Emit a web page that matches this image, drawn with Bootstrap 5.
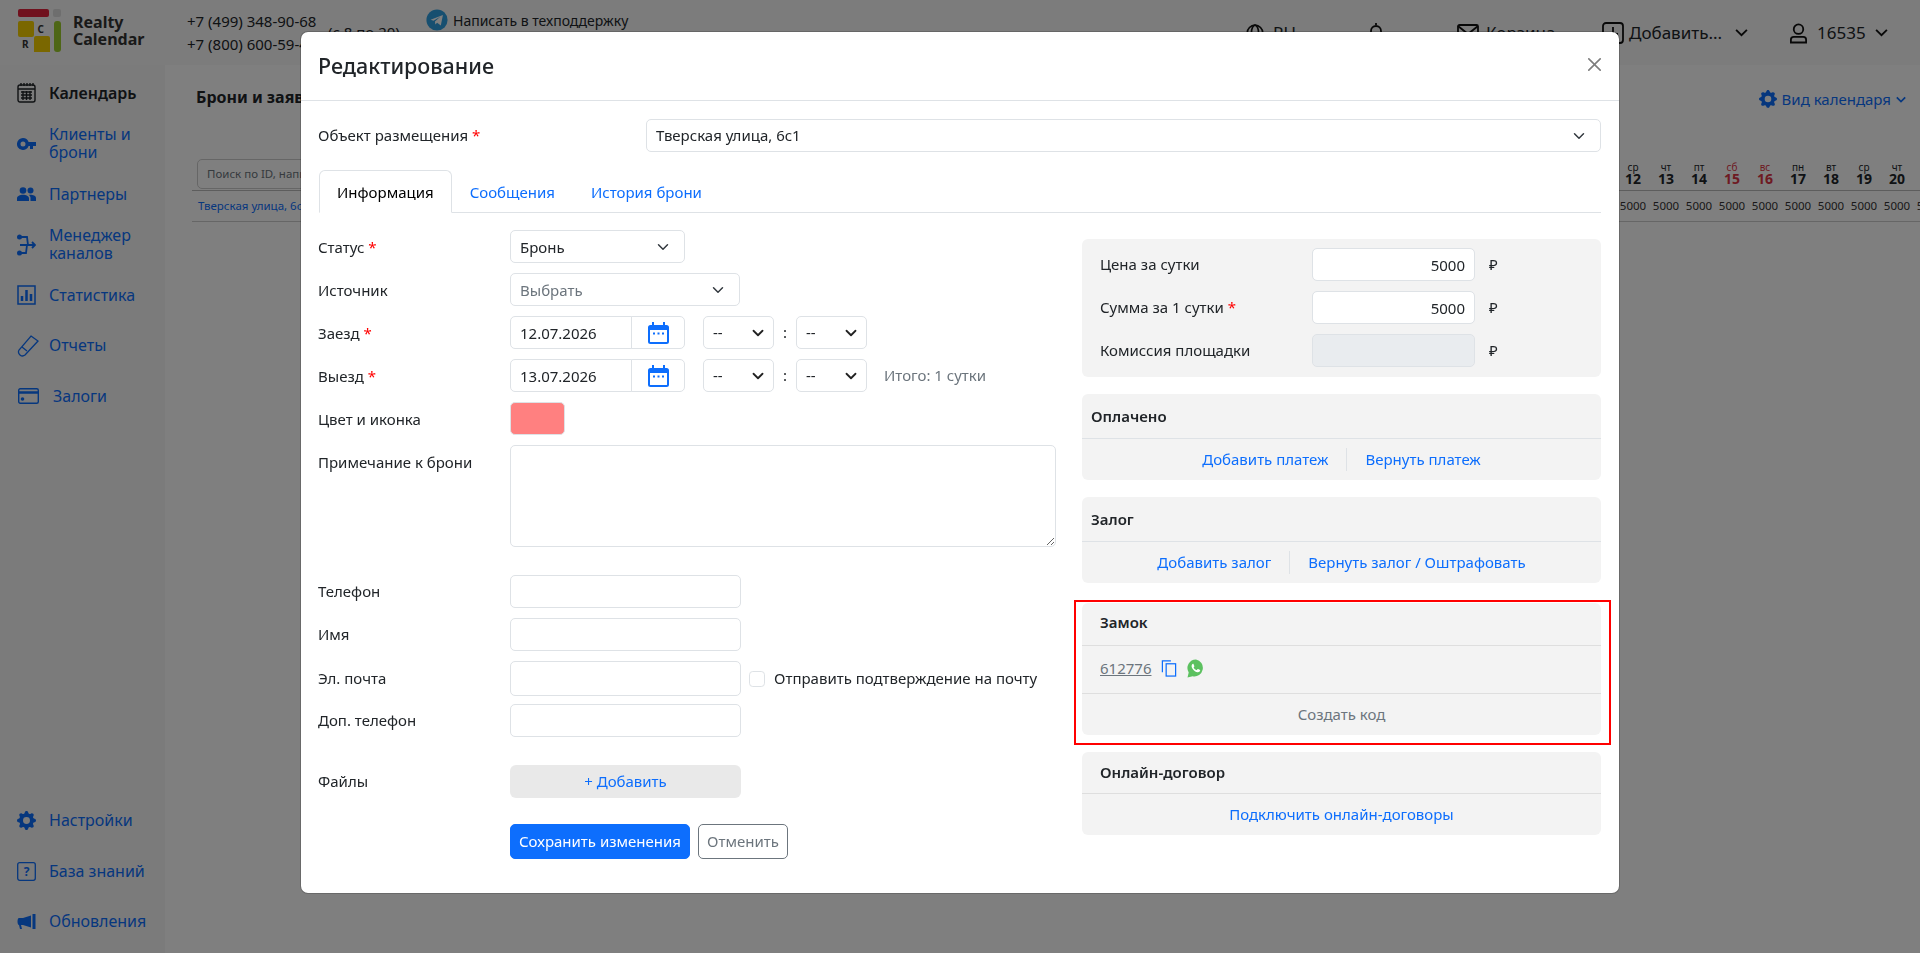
<!DOCTYPE html>
<html lang="ru">
<head>
<meta charset="utf-8">
<title>Редактирование</title>
<link rel="stylesheet" href="https://cdn.jsdelivr.net/npm/bootstrap@5.3.0/dist/css/bootstrap.min.css">
<style>
html,body{height:100%;overflow:hidden}
body{font-family:"Noto Sans","Liberation Sans",sans-serif;font-size:15px;color:#212529;background:#fff}
.rc-page{height:953px;display:flex;flex-direction:column}
.rc-top{height:65px;background:#f8f8f8;display:flex;align-items:center;flex:none;padding-left:17px}
.rc-logo{width:46px;height:44px;flex:none;margin-bottom:4px}
.rc-brand{font-weight:700;font-size:16px;line-height:17px;width:124px;padding-left:10px;color:#333;margin-bottom:3px}
.rc-phones{font-size:15px;line-height:23px;width:141px;white-space:nowrap}
.rc-hours{font-size:15px;width:98px;white-space:nowrap}
.rc-tg{display:flex;align-items:center;gap:5px;font-size:14px;margin-bottom:25px;width:820px}
.rc-tr{display:flex;align-items:center;font-size:17px;white-space:nowrap}
.rc-g7{gap:9px}
.rc-w-globe{width:122px}
.rc-w-bell{width:89px}
.rc-w-mail{width:145px;gap:7px}
.rc-w-add{width:187px;gap:5px}
.rc-w-user{gap:9px}
.rc-body{flex:1;display:flex;min-height:0}
.rc-side{width:165px;flex:none;background:#f6f6f6;padding:3px 0 6px 17px;display:flex;flex-direction:column;justify-content:space-between}
.rc-side-item{height:50.5px;display:flex;align-items:center;font-size:16px;line-height:17.5px;color:#0d6efd;text-decoration:none}
.rc-side-item.rc-active{color:#212529;font-weight:600}
.rc-side-ic{width:32px;flex:none;display:flex}
.rc-side-ic.rc-wide{width:36px}
.rc-ml1{margin-left:1px}
.rc-main{flex:1;min-width:0;padding:0 0 0 27px;position:relative;overflow:hidden}
.rc-main-h{display:flex;justify-content:space-between;align-items:flex-start;padding:20px 14px 0 4px;height:95px;font-size:15px}
.rc-main-h b{font-size:16px}
.rc-vid{color:#0d6efd;display:flex;align-items:center;gap:5px;padding-top:3px}
.rc-search{display:flex;justify-content:space-between;align-items:flex-end;height:31px;border-bottom:1px solid #bbb}
.rc-search-in{margin:0 0 1px 5px;width:200px;height:30px;border:1px solid #ccc;border-radius:5px;font-size:11.5px;padding:5px 9px;color:#6c757d}
.rc-days{display:flex;text-align:center;line-height:10px;font-size:10px;padding-bottom:4px;margin-right:6.5px}
.rc-day{width:33px;display:flex;flex-direction:column}
.rc-day b{font-size:14px;line-height:14px}
.rc-day.rc-we{color:#dc3545}
.rc-rowline{display:flex;justify-content:space-between;align-items:center;height:31px;border-bottom:1px solid #ccc;font-size:11.5px;color:#0d6efd;padding-left:6px}
.rc-cells{display:flex;color:#333;margin-right:-26.5px;flex:none}
.rc-cells span{width:33px;text-align:center;flex:none}
.rc-dialog{max-width:none;width:1320px;margin:31px auto 0}
.rc-dialog .modal-header{height:69px;padding:0 18px 0 17px;border-bottom-color:#dee2e6}
.rc-dialog .modal-title{font-size:21.5px;font-weight:500}
.rc-dialog .btn-close{margin:-4px -5px 0 0;font-size:12.5px;padding:6px}
.rc-dialog .modal-body{padding:18px 18px 34px 18px}
.rc-obj{display:flex;align-items:center;margin-bottom:18px}
.rc-obj-l{width:328px;flex:none;margin-left:-1px}
.rc-star{color:#f00}
.rc-tabs{font-size:15px}
.rc-tabs .nav-link{height:43px;padding:10px 17px}
.rc-cols{display:flex;justify-content:space-between;padding-top:17px}
.rc-left{width:737px}
.rc-right{width:519px;padding-top:9px;flex:none}
.rc-row{display:flex;align-items:center;margin-bottom:10px}
.rc-lbl{width:192px;flex:none;margin-left:-1px}
.rc-down .rc-lbl{padding-top:2px}
.rc-f{height:33px;font-size:15px;padding:3px 9px;min-height:0;border-radius:5px}
.form-select.rc-f{padding-right:28px;background-position:right 13px center}
.form-select.rc-w175,.form-select.rc-w230{padding-top:5px;padding-bottom:3px}
.rc-w175{width:175px}
.rc-w230{width:230px}
.rc-w231{width:231px}
.rc-date{width:175px;flex:none;margin-right:18px;flex-wrap:nowrap}
.rc-date .form-control{border-right:1px solid #dee2e6}
.rc-date .input-group-text{background:#fff;width:54px;padding:0;justify-content:center}
.form-select.rc-time{width:71px;flex:none;background-position:right 7px center;background-image:url("data:image/svg+xml,%3csvg xmlns='http://www.w3.org/2000/svg' viewBox='0 0 16 16'%3e%3cpath fill='none' stroke='%23222' stroke-linecap='round' stroke-linejoin='round' stroke-width='2.4' d='m2 5 6 6 6-6'/%3e%3c/svg%3e")}
.rc-colon{width:22px;text-align:center;flex:none}
.rc-total{margin-left:17px;color:#6c757d}
.rc-color{width:55px;height:33px;background:#ff8080;border:1px solid #dee2e6;border-radius:5px}
.rc-note{height:102px;width:546px;border-radius:5px}
.rc-top-al{align-items:flex-start}
.rc-top-al .rc-lbl{padding-top:6px}
.rc-after-note{margin-top:28px}
.rc-check{margin:0 9px 0 8px;width:16px;height:16px;flex:none}
.rc-mail{height:35px;margin-bottom:8px}
.rc-files{margin-top:28px;margin-bottom:26px}
.rc-addfile{width:231px;height:33px;font-size:15px;background:#e9e9e9;color:#0d6efd;border:0;padding:0}
.rc-save{display:flex;gap:8px;padding-left:191px}
.rc-save .btn{height:35px;font-size:15px;padding:0 8px;border-radius:5px}
.rc-panel{background:#f3f3f3;border-radius:6px;margin-bottom:17px}
.rc-pr{padding:9px 18px 10px}
.rc-pr-row{display:flex;align-items:center;margin-bottom:10px}
.rc-pr-row:last-child{margin-bottom:0}
.rc-pr-l{width:212px;flex:none}
.rc-num{width:163px;text-align:right;flex:none}
.rc-rub{margin-left:14px}
.rc-ph{height:45px;display:flex;align-items:center;padding:0 9px;font-weight:600;font-size:15px;border-bottom:1px solid #dee2e6}
.rc-ph2{padding-left:18px;height:43px;border-bottom-color:#dedede}
.rc-lock .rc-ph2{padding-bottom:3px}
.rc-ph3{height:42px}
.rc-pf{height:41px;display:flex;align-items:center;justify-content:center}
.rc-pf a{text-decoration:none}
.rc-sep{width:1px;height:23px;background:#dee2e6;margin:0 18px}
.rc-lock{position:relative;margin-top:20px}
.rc-frame{position:absolute;left:-8px;right:-10px;top:-3px;bottom:-10px;border:2px solid #f00;pointer-events:none}
.rc-code{height:48px;display:flex;align-items:center;padding:0 18px 2px;border-bottom:1px solid #dedede;gap:10px}
.rc-code a{color:#6c757d}
.rc-muted{color:#6c757d}
</style>
</head>
<body>
<div class="rc-page">
  <header class="rc-top">
    <svg class="rc-logo" viewBox="0 0 46 44"><rect x="1" y="0" width="31" height="8" rx="2" fill="#e0233c"/><rect x="36" y="0" width="8" height="8" rx="2" fill="#ddd"/><rect x="1" y="12" width="16" height="16" rx="2" fill="#f5cf00"/><rect x="37" y="12" width="7" height="31" rx="3" fill="#9ccc2c"/><path d="M17 43V29a2 2 0 0 1 2-2h12a2 2 0 0 1 2 2v14z" fill="#f5cf00"/><text x="20.500" y="24" font-size="10" font-weight="700" font-family="Noto Sans" fill="#333">C</text><text x="5" y="39" font-size="10" font-weight="700" font-family="Noto Sans" fill="#333">R</text></svg>
    <div class="rc-brand">Realty<br>Calendar</div>
    <div class="rc-phones">+7 (499) 348-90-68<br>+7 (800) 600-59-46</div>
    <div class="rc-hours">(с 8 по 20)</div>
    <div class="rc-tg"><svg width="22" height="22" viewBox="0 0 26 26"><circle cx="13" cy="13" r="12.5" fill="#2f9fe0"/><path d="M5.500 12.600 20 7l-2.500 12.500-4.300-3.200-2.200 2.100-.4-3.600 6.600-6-8.300 5.100z" fill="#fff"/></svg>Написать в техподдержку</div>
    <div class="rc-tr">
      <div class="rc-tr rc-w-globe rc-g7"><svg width="18" height="18" viewBox="0 0 18 18" fill="none" stroke="#111" stroke-width="1.700"><circle cx="9" cy="9" r="7.800"/><ellipse cx="9" cy="9" rx="3.600" ry="7.800"/><path d="M1 9h16"/></svg>RU</div>
      <div class="rc-tr rc-w-bell"><svg width="16" height="22" viewBox="0 0 16 22" fill="none" stroke="#111" stroke-width="1.800"><path d="M8 1v2M3 17V9a5 5 0 0 1 10 0v8M1 17h14M6 20h4"/></svg></div>
      <div class="rc-tr rc-w-mail"><svg width="22" height="17" viewBox="0 0 22 17" fill="none" stroke="#111" stroke-width="1.800"><rect x="1" y="1" width="20" height="15" rx="1.500"/><path d="m1 2 10 8 10-8"/></svg>Корзина</div>
      <div class="rc-tr rc-w-add"><svg width="22" height="22" viewBox="0 0 22 22" fill="none" stroke="#111" stroke-width="1.800"><rect x="1" y="1" width="20" height="20" rx="3"/><path d="M11 5v7h5"/></svg>Добавить...<svg class="ms-2" width="13" height="9" viewBox="0 0 14 10" fill="none" stroke="#111" stroke-width="2"><path d="m1 2 6 6 6-6"/></svg></div>
      <div class="rc-tr rc-w-user"><svg width="19" height="22" viewBox="0 0 20 22" fill="none" stroke="#111" stroke-width="1.900"><circle cx="10" cy="7" r="5"/><path d="M2 21v-3a3 3 0 0 1 3-3h10a3 3 0 0 1 3 3v3z"/></svg><span>16535</span><svg width="13" height="9" viewBox="0 0 14 10" fill="none" stroke="#111" stroke-width="2"><path d="m1 2 6 6 6-6"/></svg></div>
    </div>
  </header>
  <div class="rc-body">
    <aside class="rc-side">
      <div>
        <a class="rc-side-item rc-active" href="#"><span class="rc-side-ic"><svg width="19" height="20" viewBox="0 0 19 20" fill="none" stroke="#212529" stroke-width="1.400"><rect x="1" y="2" width="17" height="17" rx="2"/><path d="M1 6h17M4 0v3M7 0v3M10 0v3M13 0v3M16 0v3M4 9h11M4 12h11M4 15h11M6 8v9M9.500 8v9M13 8v9"/></svg></span>Календарь</a>
        <a class="rc-side-item" href="#"><span class="rc-side-ic"><svg width="19" height="12" viewBox="0 0 19 12" fill="#0d6efd"><path d="M6 0a6 6 0 1 0 5.600 8H13v3h3V8h3V4H11.600A6 6 0 0 0 6 0zm0 3.500a2.500 2.500 0 1 1 0 5 2.500 2.500 0 0 1 0-5z"/></svg></span><span>Клиенты и брони</span></a>
        <a class="rc-side-item" href="#"><span class="rc-side-ic"><svg width="19" height="14" viewBox="0 0 19 14" fill="#0d6efd"><circle cx="6" cy="3.500" r="3.300"/><circle cx="13.500" cy="3.500" r="3"/><path d="M0 14v-2.500C0 9 3 7.800 6 7.800s6 1.200 6 3.700V14zM13.500 14v-3c0-1.200-.5-2.300-1.500-3.100 3-.4 7 .7 7 3.100v3z"/></svg></span>Партнеры</a>
        <a class="rc-side-item" href="#"><span class="rc-side-ic"><svg width="19" height="22" viewBox="0 0 19 22" fill="none" stroke="#0d6efd" stroke-width="1.800"><circle cx="2.500" cy="3" r="1.600" fill="#0d6efd"/><circle cx="2.500" cy="19" r="1.600" fill="#0d6efd"/><path d="M3 3h7l1 8h7M3 11h8M3 19h6l1-8M15 8l3 3-3 3"/></svg></span><span>Менеджер каналов</span></a>
        <a class="rc-side-item" href="#"><span class="rc-side-ic"><svg width="19" height="20" viewBox="0 0 19 20" fill="none" stroke="#0d6efd" stroke-width="1.500"><rect x="1" y="1" width="17" height="18"/><path stroke-width="2.500" d="M5 16v-5M9.500 16V5M14 16V9"/></svg></span>Статистика</a>
        <a class="rc-side-item" href="#"><span class="rc-side-ic"><svg width="22" height="22" viewBox="0 0 22 22" fill="none" stroke="#0d6efd" stroke-width="1.300"><path d="M14 1l7 5L8 20a4 4 0 0 1-6-5zM5 12l5 4"/></svg></span>Отчеты</a>
        <a class="rc-side-item" href="#"><span class="rc-side-ic rc-wide"><svg width="21" height="16" viewBox="0 0 21 16" fill="none" stroke="#0d6efd" stroke-width="1.400" class="rc-ml1"><rect x=".7" y=".7" width="19.600" height="14.600" rx="1.500"/><path stroke-width="2.500" d="M1 4.500h19"/><circle cx="4.500" cy="11" r="1.800" fill="#0d6efd" stroke="none"/></svg></span>Залоги</a>
      </div>
      <div>
        <a class="rc-side-item" href="#"><span class="rc-side-ic"><svg width="19" height="19" viewBox="0 0 16 16" fill="#0d6efd"><path d="M9.405 1.050c-.413-1.400-2.397-1.400-2.810 0l-.1.340a1.464 1.464 0 0 1-2.105.872l-.31-.17c-1.283-.698-2.686.705-1.987 1.987l.169.311c.446.820.023 1.841-.872 2.105l-.34.1c-1.400.413-1.400 2.397 0 2.810l.34.1a1.464 1.464 0 0 1 .872 2.105l-.17.31c-.698 1.283.705 2.686 1.987 1.987l.311-.169a1.464 1.464 0 0 1 2.105.872l.1.340c.413 1.400 2.397 1.400 2.810 0l.1-.34a1.464 1.464 0 0 1 2.105-.872l.31.17c1.283.698 2.686-.705 1.987-1.987l-.169-.311a1.464 1.464 0 0 1 .872-2.105l.34-.1c1.400-.413 1.400-2.397 0-2.810l-.34-.1a1.464 1.464 0 0 1-.872-2.105l.17-.31c.698-1.283-.705-2.686-1.987-1.987l-.311.169a1.464 1.464 0 0 1-2.105-.872l-.1-.34zM8 10.930a2.929 2.929 0 1 1 0-5.860 2.929 2.929 0 0 1 0 5.858z"/></svg></span>Настройки</a>
        <a class="rc-side-item" href="#"><span class="rc-side-ic"><svg width="19" height="19" viewBox="0 0 19 19" fill="none" stroke="#0d6efd" stroke-width="1.300"><rect x=".7" y=".7" width="17.600" height="17.600" rx="2"/><text x="9.500" y="14" text-anchor="middle" font-size="12" font-weight="700" font-family="Noto Sans" fill="#0d6efd" stroke="none">?</text></svg></span>База знаний</a>
        <a class="rc-side-item" href="#"><span class="rc-side-ic"><svg width="19" height="16" viewBox="0 0 19 16" fill="#0d6efd"><path d="M15.500 0h3v15h-3zM14 1.500v12L6 11H4l1 4H3l-1-4c-2 0-2-7 0-7h4z"/></svg></span>Обновления</a>
      </div>
    </aside>
    <main class="rc-main">
      <div class="rc-main-h"><b>Брони и заявки</b><span class="rc-vid"><svg width="18" height="18" viewBox="0 0 16 16" fill="#0d6efd"><path d="M9.405 1.050c-.413-1.400-2.397-1.400-2.810 0l-.1.340a1.464 1.464 0 0 1-2.105.872l-.31-.17c-1.283-.698-2.686.705-1.987 1.987l.169.311c.446.820.023 1.841-.872 2.105l-.34.1c-1.400.413-1.400 2.397 0 2.810l.34.1a1.464 1.464 0 0 1 .872 2.105l-.17.31c-.698 1.283.705 2.686 1.987 1.987l.311-.169a1.464 1.464 0 0 1 2.105.872l.1.340c.413 1.400 2.397 1.400 2.810 0l.1-.34a1.464 1.464 0 0 1 2.105-.872l.31.17c1.283.698 2.686-.705 1.987-1.987l-.169-.311a1.464 1.464 0 0 1 .872-2.105l.34-.1c1.400-.413 1.400-2.397 0-2.810l-.34-.1a1.464 1.464 0 0 1-.872-2.105l.17-.31c.698-1.283-.705-2.686-1.987-1.987l-.311.169a1.464 1.464 0 0 1-2.105-.872l-.1-.34zM8 10.930a2.929 2.929 0 1 1 0-5.860 2.929 2.929 0 0 1 0 5.858z"/></svg>Вид календаря<svg width="10" height="7" viewBox="0 0 14 10" fill="none" stroke="#0d6efd" stroke-width="2.400"><path d="m1 2 6 6 6-6"/></svg></span></div>
      <div class="rc-search"><div class="rc-search-in">Поиск по ID, написать</div>
        <div class="rc-days">
          <div class="rc-day">ср<b>12</b></div><div class="rc-day">чт<b>13</b></div><div class="rc-day">пт<b>14</b></div><div class="rc-day rc-we">сб<b>15</b></div><div class="rc-day rc-we">вс<b>16</b></div><div class="rc-day">пн<b>17</b></div><div class="rc-day">вт<b>18</b></div><div class="rc-day">ср<b>19</b></div><div class="rc-day">чт<b>20</b></div>
        </div>
      </div>
      <div class="rc-rowline"><span>Тверская улица, 6с1</span><div class="rc-cells"><span>5000</span><span>5000</span><span>5000</span><span>5000</span><span>5000</span><span>5000</span><span>5000</span><span>5000</span><span>5000</span><span>5000</span></div></div>
    </main>
  </div>
</div>

<div class="modal-backdrop show"></div>
<div class="modal d-block" tabindex="-1">
  <div class="modal-dialog rc-dialog">
    <div class="modal-content">
      <div class="modal-header">
        <h5 class="modal-title">Редактирование</h5>
        <button type="button" class="btn-close" aria-label="Закрыть"></button>
      </div>
      <div class="modal-body">
        <div class="rc-obj">
          <div class="rc-obj-l">Объект размещения <span class="rc-star">*</span></div>
          <select class="form-select rc-f"><option>Тверская улица, 6с1</option></select>
        </div>
        <ul class="nav nav-tabs rc-tabs">
          <li class="nav-item"><a class="nav-link active" href="#">Информация</a></li>
          <li class="nav-item"><a class="nav-link" href="#">Сообщения</a></li>
          <li class="nav-item"><a class="nav-link" href="#">История брони</a></li>
        </ul>
        <div class="rc-cols">
          <div class="rc-left">
            <div class="rc-row rc-down"><div class="rc-lbl">Статус <span class="rc-star">*</span></div><select class="form-select rc-f rc-w175"><option>Бронь</option></select></div>
            <div class="rc-row rc-down"><div class="rc-lbl">Источник</div><select class="form-select rc-f rc-w230 rc-muted"><option>Выбрать</option></select></div>
            <div class="rc-row rc-down"><div class="rc-lbl">Заезд <span class="rc-star">*</span></div>
              <div class="input-group rc-date"><input class="form-control rc-f" value="12.07.2026"><span class="input-group-text rc-f"><svg width="21" height="22" viewBox="0 0 21 22" fill="#0d6efd"><path d="M4 0h2v3h9V0h2v3h1.500A2.500 2.500 0 0 1 21 5.500v14a2.500 2.500 0 0 1-2.500 2.500h-16A2.500 2.500 0 0 1 0 19.500v-14A2.500 2.500 0 0 1 2.500 3H4zM2 8v11.500a.5.5 0 0 0 .5.5h16a.5.5 0 0 0 .5-.5V8z"/><path d="M5 10.500h2v2H5zM9.500 10.500h2v2h-2zM14 10.500h2v2h-2z"/></svg></span></div>
              <select class="form-select rc-f rc-time"><option>--</option></select><div class="rc-colon">:</div><select class="form-select rc-f rc-time"><option>--</option></select></div>
            <div class="rc-row rc-down"><div class="rc-lbl">Выезд <span class="rc-star">*</span></div>
              <div class="input-group rc-date"><input class="form-control rc-f" value="13.07.2026"><span class="input-group-text rc-f"><svg width="21" height="22" viewBox="0 0 21 22" fill="#0d6efd"><path d="M4 0h2v3h9V0h2v3h1.500A2.500 2.500 0 0 1 21 5.500v14a2.500 2.500 0 0 1-2.500 2.500h-16A2.500 2.500 0 0 1 0 19.500v-14A2.500 2.500 0 0 1 2.500 3H4zM2 8v11.500a.5.5 0 0 0 .5.5h16a.5.5 0 0 0 .5-.5V8z"/><path d="M5 10.500h2v2H5zM9.500 10.500h2v2h-2zM14 10.500h2v2h-2z"/></svg></span></div>
              <select class="form-select rc-f rc-time"><option>--</option></select><div class="rc-colon">:</div><select class="form-select rc-f rc-time"><option>--</option></select><div class="rc-total">Итого: 1 сутки</div></div>
            <div class="rc-row rc-down"><div class="rc-lbl">Цвет и иконка</div><div class="rc-color"></div></div>
            <div class="rc-row rc-top-al"><div class="rc-lbl">Примечание к брони</div><textarea class="form-control rc-note"></textarea></div>
            <div class="rc-row rc-after-note"><div class="rc-lbl">Телефон</div><input class="form-control rc-f rc-w231"></div>
            <div class="rc-row"><div class="rc-lbl">Имя</div><input class="form-control rc-f rc-w231"></div>
            <div class="rc-row rc-mail"><div class="rc-lbl">Эл. почта</div><input class="form-control rc-f rc-w231 h-100"><input type="checkbox" class="form-check-input rc-check mt-0"><span>Отправить подтверждение на почту</span></div>
            <div class="rc-row"><div class="rc-lbl">Доп. телефон</div><input class="form-control rc-f rc-w231"></div>
            <div class="rc-row rc-files"><div class="rc-lbl">Файлы</div><button type="button" class="btn rc-addfile">+ Добавить</button></div>
            <div class="rc-save"><button type="button" class="btn btn-primary">Сохранить изменения</button><button type="button" class="btn btn-outline-secondary">Отменить</button></div>
          </div>
          <div class="rc-right">
            <div class="rc-panel rc-pr">
              <div class="rc-pr-row"><div class="rc-pr-l">Цена за сутки</div><input class="form-control rc-f rc-num" value="5000"><span class="rc-rub">₽</span></div>
              <div class="rc-pr-row"><div class="rc-pr-l">Сумма за 1 сутки <span class="rc-star">*</span></div><input class="form-control rc-f rc-num" value="5000"><span class="rc-rub">₽</span></div>
              <div class="rc-pr-row"><div class="rc-pr-l">Комиссия площадки</div><input class="form-control rc-f rc-num" disabled><span class="rc-rub">₽</span></div>
            </div>
            <div class="rc-panel">
              <div class="rc-ph">Оплачено</div>
              <div class="rc-pf"><a href="#">Добавить платеж</a><span class="rc-sep"></span><a href="#">Вернуть платеж</a></div>
            </div>
            <div class="rc-panel">
              <div class="rc-ph">Залог</div>
              <div class="rc-pf"><a href="#">Добавить залог</a><span class="rc-sep"></span><a href="#">Вернуть залог / Оштрафовать</a></div>
            </div>
            <div class="rc-panel rc-lock">
              <div class="rc-frame"></div>
              <div class="rc-ph rc-ph2">Замок</div>
              <div class="rc-code"><a href="#">612776</a><svg width="16" height="17" viewBox="0 0 16 18" fill="none" stroke="#0d6efd" stroke-width="1.300"><rect x="5" y="4" width="10" height="13"/><path d="M1 13V1h9"/></svg><svg width="18" height="19" viewBox="0 0 18 19"><path d="M9 .5a8.500 8.500 0 0 0-7.300 12.900L.5 18.500l5.200-1.300A8.500 8.500 0 1 0 9 .5z" fill="#5cc160"/><path d="M6.300 4.700c-.4 0-1 .2-1.400 1-.6 1.200-.3 2.600.8 4.200 1.300 1.900 3 3 4.800 3.300 1.200.2 2.100-.3 2.500-1.100.2-.5.2-1 .1-1.200l-2-1c-.3 0-.5.100-.7.400l-.5.700c-.2.200-.4.200-.6.100-1.100-.5-2-1.300-2.600-2.400-.1-.2 0-.4.100-.5l.5-.6c.1-.2.100-.4 0-.6l-.8-1.900c-.1-.3-.2-.4-.2-.4z" fill="#fff"/></svg></div>
              <div class="rc-pf rc-muted">Создать код</div>
            </div>
            <div class="rc-panel">
              <div class="rc-ph rc-ph2 rc-ph3">Онлайн-договор</div>
              <div class="rc-pf"><a href="#">Подключить онлайн-договоры</a></div>
            </div>
          </div>
        </div>
      </div>
    </div>
  </div>
</div>
<script src="https://cdn.jsdelivr.net/npm/bootstrap@5.3.0/dist/js/bootstrap.bundle.min.js"></script>
</body>
</html>
